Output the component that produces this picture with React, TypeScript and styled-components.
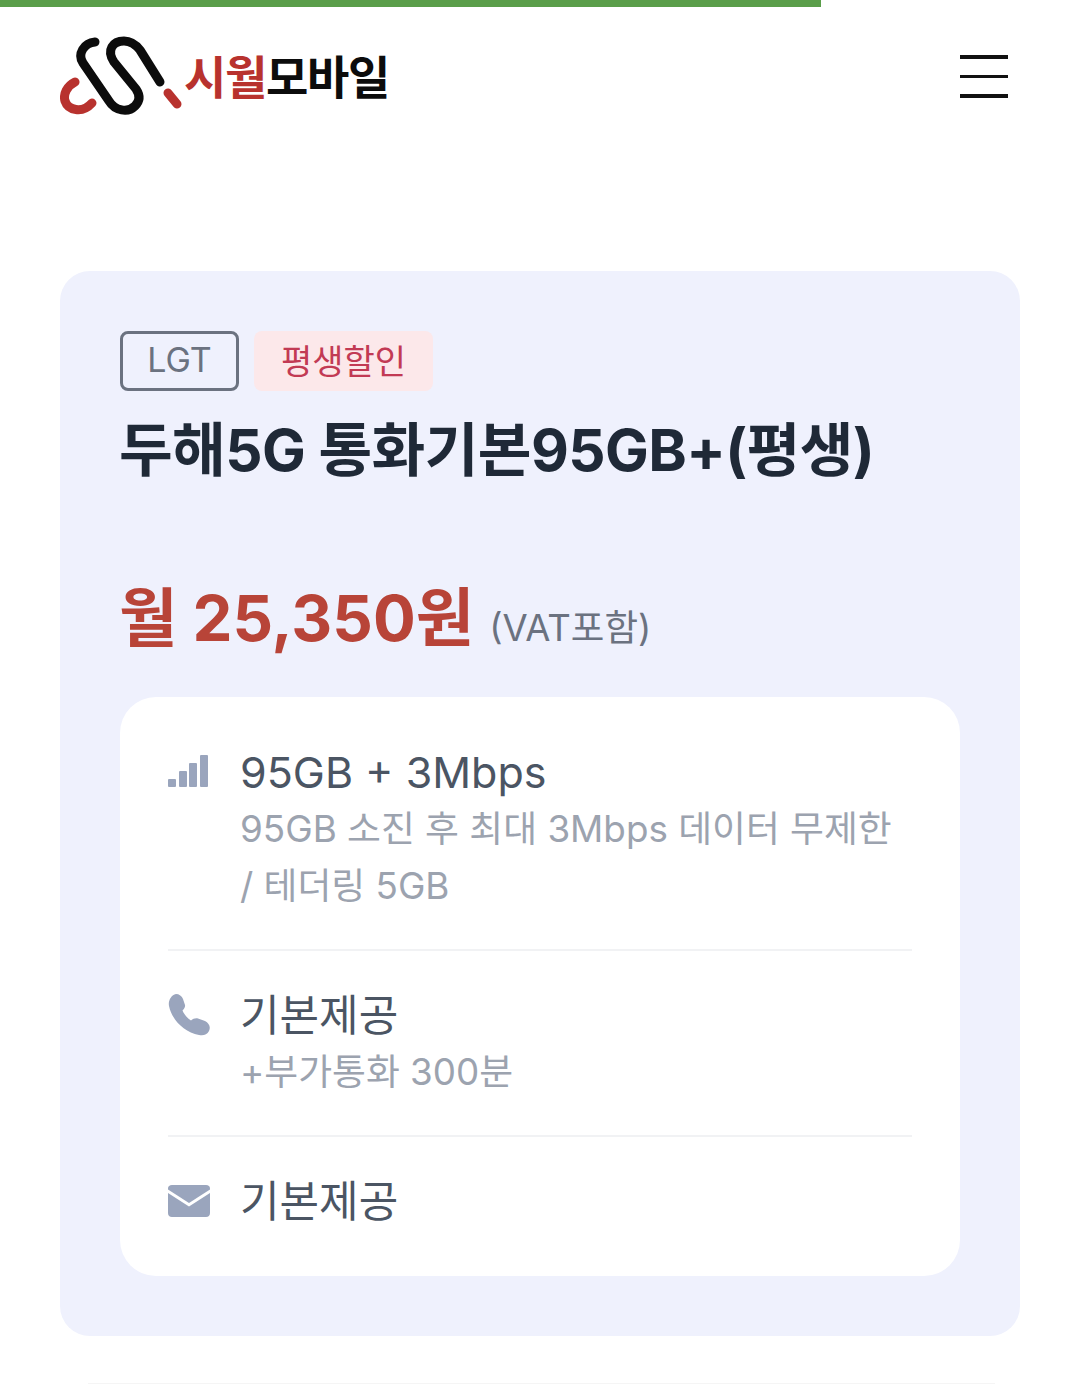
import React from "react";
import styled, { createGlobalStyle } from "styled-components";

const Global = createGlobalStyle`
  html, body { margin: 0; padding: 0; background: #fff; }
  body { font-family: Inter, "Noto Sans CJK KR", sans-serif; overflow: hidden; }
  * { box-sizing: border-box; }
`;

const Page = styled.div`
  width: 1080px;
  height: 1384px;
  overflow: hidden;
  background: #fff;
`;

const Progress = styled.div`
  height: 7px;
  width: 821px;
  background: #5a9e4a;
`;

const Header = styled.header`
  height: 136px;
  padding: 24px 72px 0 60px;
  display: flex;
  align-items: flex-start;
  justify-content: space-between;
`;

const Logo = styled.div`
  display: flex;
  align-items: center;
  height: 90px;
`;

const LogoText = styled.div`
  margin-left: 0;
  margin-top: -4px;
  font-family: "Noto Sans CJK KR", sans-serif;
  font-weight: 700;
  font-size: 46px;
  line-height: 1;
  letter-spacing: -1.3px;
  color: #0c0c0c;
`;

const LogoRed = styled.span`
  color: #b8322e;
`;

const Burger = styled.button`
  width: 48px;
  margin-top: 24px;
  padding: 0;
  border: 0;
  background: none;
  display: flex;
  flex-direction: column;
  gap: 16px;
`;

const BurgerLine = styled.span`
  display: block;
  height: 3.5px;
  background: #111;
`;

const Card = styled.section`
  margin: 128px 60px 0;
  height: 1065px;
  padding: 60px;
  background: #eff1fd;
  border-radius: 30px;
`;

const Tags = styled.div`
  display: flex;
  gap: 15px;
`;

const Tag = styled.span<{ $sale?: boolean }>`
  height: 60px;
  padding-bottom: 3px;
  display: flex;
  align-items: center;
  justify-content: center;
  border-radius: 8px;
  font-size: 34px;
  width: ${(p) => (p.$sale ? "179px" : "119px")};
  color: ${(p) => (p.$sale ? "#c23a54" : "#6b7280")};
  background: ${(p) => (p.$sale ? "#fce8ea" : "transparent")};
  border: ${(p) => (p.$sale ? "0" : "3px solid #6b7280")};
`;

const Title = styled.h1`
  margin: 24px 0 0 -1px;
  font-size: 58.4px;
  line-height: 70px;
  font-weight: 700;
  letter-spacing: -0.6px;
  color: #1f2937;
  white-space: nowrap;
`;

const PriceRow = styled.div`
  margin-top: 86px;
  margin-left: -1px;
  height: 90px;
  display: flex;
  align-items: baseline;
  gap: 15px;
`;

const Price = styled.strong`
  font-size: 63.500px;
  line-height: 94px;
  font-weight: 700;
  color: #b84438;
`;

const Vat = styled.span`
  font-size: 36.500px;
  color: #6b7280;
`;

const Box = styled.div`
  margin-top: 36px;
  height: 579px;
  padding: 48px 48px 0;
  background: #fff;
  border-radius: 36px;
`;

const Row = styled.div<{ $h: number; $last?: boolean }>`
  display: flex;
  gap: 30px;
  height: ${(p) => p.$h}px;
  border-bottom: ${(p) => (p.$last ? "0" : "2px solid #f1f2f4")};
  margin-bottom: 36px;
`;

const IconCell = styled.div<{ $top: number }>`
  width: 42px;
  flex: none;
  display: flex;
  justify-content: center;
  padding-top: ${(p) => p.$top}px;
`;

const RowBody = styled.div<{ $lift?: boolean }>`
  min-width: 0;
  margin-top: ${(p) => (p.$lift ? "-1px" : "0")};
`;

const RowTitle = styled.div`
  font-size: 43px;
  line-height: 56px;
  color: #4b5563;
`;

const RowSub = styled.div`
  font-size: 36.800px;
  line-height: 57px;
  color: #9ca3af;
  width: 665px;
`;

const BottomLine = styled.div`
  margin: 47px 85px 0 88px;
  height: 2px;
  background: #f5f5f5;
`;

export default function App() {
  return (
    <Page>
      <Global />
      <Progress />
      <Header>
        <Logo>
          <svg width="124" height="90" viewBox="60 31 124 90" fill="none" strokeLinecap="round" strokeLinejoin="round">
            <path
              d="M95 42 C84 43 77 54 83 63 L109 101 C115 111 128 113 135 106 C140 101 140 95 136 89 L114 62 C106 50 113 41 124 41 C131 41 136 45 140 50 L160 82"
              stroke="#0c0c0c"
              strokeWidth="9"
            />
            <path
              d="M75 82 C67 86 63 94 65 101 C68 110 82 114 92 103"
              stroke="#b8322e"
              strokeWidth="9"
            />
            <path d="M168 93 L177 104" stroke="#b8322e" strokeWidth="9" />
          </svg>
          <LogoText>
            <LogoRed>시월</LogoRed>모바일
          </LogoText>
        </Logo>
        <Burger aria-label="menu">
          <BurgerLine />
          <BurgerLine />
          <BurgerLine />
        </Burger>
      </Header>
      <Card>
        <Tags>
          <Tag>LGT</Tag>
          <Tag $sale>평생할인</Tag>
        </Tags>
        <Title>두해5G 통화기본95GB+(평생)</Title>
        <PriceRow>
          <Price>월 25,350원</Price>
          <Vat>(VAT포함)</Vat>
        </PriceRow>
        <Box>
          <Row $h={206}>
            <IconCell $top={9}>
              <svg width="42" height="36" viewBox="0 0 42 36" fill="#9aa5bd">
                <rect x="0" y="25" width="8" height="8" rx="1" />
                <rect x="11" y="17" width="8" height="16" rx="1" />
                <rect x="21" y="9" width="8" height="24" rx="1" />
                <rect x="32" y="1" width="8" height="32" rx="1" />
              </svg>
            </IconCell>
            <RowBody $lift>
              <RowTitle>95GB + 3Mbps</RowTitle>
              <RowSub>95GB 소진 후 최대 3Mbps 데이터 무제한 / 테더링 5GB</RowSub>
            </RowBody>
          </Row>
          <Row $h={150}>
            <IconCell $top={7}>
              <svg width="42" height="42" viewBox="0 0 42 42" fill="#9aa5bd">
                <path d="M8 0 C11 0 14 2 15 5 L17 11 C17.500 13 16 15 14.500 16.500 C16 20 19 24 23 26.500 C25 25 27 24 30 24.500 L37 27 C41 29 43 33 41 37 C39 41 35 42 31 41 C16 38 4 26 1 12 C0 7 3 1 8 0 Z" />
              </svg>
            </IconCell>
            <RowBody>
              <RowTitle>기본제공</RowTitle>
              <RowSub>+부가통화 300분</RowSub>
            </RowBody>
          </Row>
          <Row $h={90} $last>
            <IconCell $top={12}>
              <svg width="42" height="32" viewBox="0 0 42 32" fill="#9aa5bd">
                <path d="M4 0 H38 C40.500 0 42 1.500 42 3.500 V4.500 L21 18 L0 4.500 V3.500 C0 1.500 1.500 0 4 0 Z" />
                <path d="M0 8 L21 21.500 L42 8 V28 C42 30.500 40.500 32 38 32 H4 C1.500 32 0 30.500 0 28 Z" />
              </svg>
            </IconCell>
            <RowBody>
              <RowTitle>기본제공</RowTitle>
            </RowBody>
          </Row>
        </Box>
      </Card>
      <BottomLine />
    </Page>
  );
}
